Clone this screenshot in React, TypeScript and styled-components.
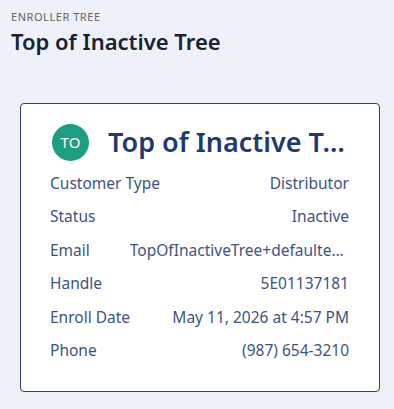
import React from 'react'
import styled, { createGlobalStyle } from 'styled-components'

const GlobalStyle = createGlobalStyle`
  html, body {
    margin: 0;
    background: #eef2f8;
    font-family: "Noto Sans", "Open Sans", sans-serif;
  }
`

type Row = { label: string; value: string }

const rows: Row[] = [
  { label: 'Customer Type', value: 'Distributor' },
  { label: 'Status', value: 'Inactive' },
  { label: 'Email', value: 'TopOfInactiveTree+defaultenroller@example.com' },
  { label: 'Handle', value: '5E01137181' },
  { label: 'Enroll Date', value: 'May 11, 2026 at 4:57 PM' },
  { label: 'Phone', value: '(987) 654-3210' },
]

function App() {
  return (
    <Page>
      <GlobalStyle />
      <Header>
        <Eyebrow>Enroller Tree</Eyebrow>
        <PageTitle>Top of Inactive Tree</PageTitle>
      </Header>
      <Card>
        <CardHead>
          <Avatar>TO</Avatar>
          <CardTitle>Top of Inactive Tree</CardTitle>
        </CardHead>
        <Details>
          {rows.map((r) => (
            <DetailRow key={r.label}>
              <Label>{r.label}</Label>
              <Value>{r.value}</Value>
            </DetailRow>
          ))}
        </Details>
      </Card>
    </Page>
  )
}

const Page = styled.div`
  padding: 10px 14px 17px 11px;
`

const Header = styled.header`
  display: flex;
  flex-direction: column;
  gap: 2px;
`

const Eyebrow = styled.div`
  font-size: 11px;
  line-height: 14px;
  text-transform: uppercase;
  color: #5d6470;
  letter-spacing: 0.05em;
`

const PageTitle = styled.h1`
  margin: 0;
  font-size: 22px;
  line-height: 30px;
  font-weight: 600;
  color: #1a2233;
`

const Card = styled.section`
  margin: 47px 0 0 9px;
  height: 289px;
  box-sizing: border-box;
  background: #fff;
  border: 1px solid #2d4470;
  border-radius: 4px;
  padding: 18px 30px 0 29px;
`

const CardHead = styled.div`
  display: flex;
  align-items: center;
  gap: 19px;
`

const Avatar = styled.div`
  flex-shrink: 0;
  margin-left: 2px;
  width: 37px;
  height: 37px;
  border-radius: 50%;
  background: #1e9e80;
  color: #fff;
  font-size: 15px;
  display: flex;
  align-items: center;
  justify-content: center;
`

const CardTitle = styled.h2`
  margin: 0;
  min-width: 0;
  font-size: 27px;
  line-height: 40px;
  font-weight: 600;
  color: #1f3a6e;
  white-space: nowrap;
  overflow: hidden;
  text-overflow: ellipsis;
`

const Details = styled.div`
  margin-top: 4px;
  display: flex;
  flex-direction: column;
`

const DetailRow = styled.div`
  display: flex;
  justify-content: space-between;
  gap: 40px;
  height: 33.5px;
  align-items: center;
  font-size: 15.5px;
  color: #3d5482;
`

const Label = styled.span`
  flex-shrink: 0;
`

const Value = styled.span`
  min-width: 0;
  white-space: nowrap;
  overflow: hidden;
  text-overflow: ellipsis;
`

export default App
